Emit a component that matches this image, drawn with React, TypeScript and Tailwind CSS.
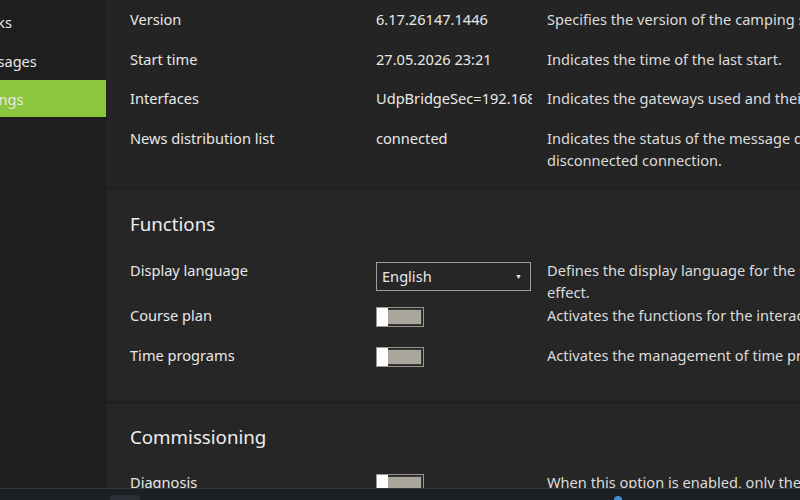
import React from 'react';

const font = { fontFamily: '"Noto Sans", "Open Sans", sans-serif' };

interface RowProps {
  label: string;
  children?: React.ReactNode;
  desc: React.ReactNode;
  className?: string;
}

const Row: React.FC<RowProps> = ({ label, children, desc, className }) => (
  <div className={`flex ${className ?? ''}`}>
    <div className="w-[246px] shrink-0 whitespace-nowrap text-[#e8e8e8]">{label}</div>
    <div className="mr-[15px] w-[156px] shrink-0 overflow-hidden whitespace-nowrap text-[#e8e8e8]">{children}</div>
    <div className="min-w-0 flex-1 overflow-hidden whitespace-nowrap text-[#dcdcdc]">{desc}</div>
  </div>
);

const Toggle: React.FC = () => (
  <div className="relative mt-[2px] h-[20px] w-[48px] border border-[#9a968e] p-[1px]">
    <div className="h-full w-full border border-[#3c3c3c] bg-[#aaa69c]" />
    <div className="absolute left-0 top-0 h-full w-[11px] bg-white" />
  </div>
);

const App: React.FC = () => {
  return (
    <div className="flex h-[500px] w-[800px] flex-col overflow-hidden bg-[#1d1d1d] text-[14.6px] leading-[20px]" style={font}>
      <div className="flex min-h-0 flex-1">
        {/* sidebar */}
        <div className="w-[106px] shrink-0 overflow-hidden bg-[#1e1e1e] pt-[12px] text-[#e8e8e8]">
          <div className="ml-[-25px] h-[39px] whitespace-nowrap">Tasks</div>
          <div className="ml-[-31px] h-[29px] whitespace-nowrap">Messages</div>
          <div className="flex h-[37px] items-center whitespace-nowrap bg-[#8cc63e]">
            <span className="ml-[-32px]">Settings</span>
          </div>
        </div>

        {/* content */}
        <div className="flex min-w-0 flex-1 flex-col gap-[3px] overflow-hidden bg-[#202020]">
          <div className="bg-[#242424] pl-[24px] pt-[9px] pb-[17px]">
            <div className="flex flex-col gap-[19.6px]">
              <Row label="Version" desc="Specifies the version of the camping software.">6.17.26147.1446</Row>
              <Row label="Start time" desc="Indicates the time of the last start.">27.05.2026 23:21</Row>
              <Row label="Interfaces" desc="Indicates the gateways used and their addresses.">UdpBridgeSec=192.168.0.10</Row>
              <Row
                label="News distribution list"
                desc={
                  <>
                    <div>Indicates the status of the message distribution: connected or</div>
                    <div className="mt-[2px]">disconnected connection.</div>
                  </>
                }
              >
                connected
              </Row>
            </div>
          </div>

          <div className="bg-[#262626] pl-[24px] pt-[22px] pb-[34px]">
            <div className="text-[18.7px] leading-[24px] text-[#eeeeee]">Functions</div>
            <div className="mt-[24px] flex flex-col">
              <Row
                label="Display language"
                desc={
                  <>
                    <div>Defines the display language for the user interface. Changes take</div>
                    <div className="mt-[2px]">effect.</div>
                  </>
                }
              >
                <div className="mt-[2px] flex h-[29px] w-[155px] items-center justify-between border border-[#9e9e9e] px-[5px]">
                  <span>English</span>
                  <span className="mr-[3px] text-[7px] leading-none">▼</span>
                </div>
              </Row>
              <Row label="Course plan" desc="Activates the functions for the interactive course plan." className="mt-[3px]">
                <Toggle />
              </Row>
              <Row label="Time programs" desc="Activates the management of time programs." className="mt-[18px]">
                <Toggle />
              </Row>
            </div>
          </div>

          <div className="flex-1 bg-[#262626] pl-[24px] pt-[21px]">
            <div className="text-[18.7px] leading-[24px] text-[#eeeeee]">Commissioning</div>
            <div className="mt-[23px]">
              <Row label="Diagnosis" desc="When this option is enabled, only the diagnostic functions are available.">
                <Toggle />
              </Row>
            </div>
          </div>
        </div>
      </div>

      {/* taskbar edge */}
      <div className="relative h-[12px] shrink-0 border-t border-[#34373c] bg-[#1c1f24]">
        <div className="absolute left-[110px] top-[6px] h-[8px] w-[30px] rounded-t-[3px] bg-[#2c2f35]" />
        <div className="absolute left-[614px] top-[7px] h-[8px] w-[8px] rounded-full bg-[#3f8fd0]" />
      </div>
    </div>
  );
};

export default App;
